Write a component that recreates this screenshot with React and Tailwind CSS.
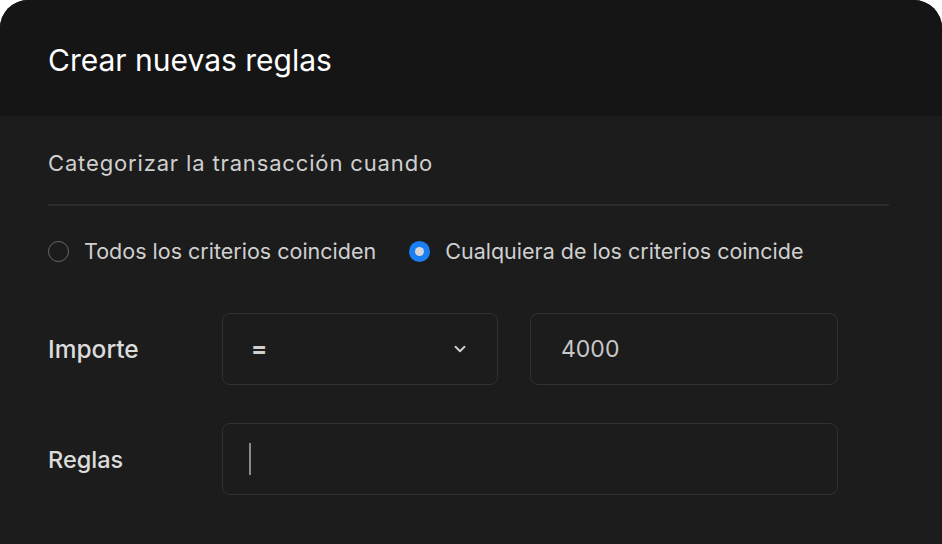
import React from 'react';
import { ChevronDown } from 'lucide-react';

const font = { fontFamily: 'Inter, "Noto Sans", sans-serif' };

const Radio = ({ checked, label }) => (
  <label className="flex items-center gap-[15px] cursor-pointer">
    {checked ? (
      <span className="w-[21px] h-[21px] rounded-full bg-[#1a7ff2] flex items-center justify-center">
        <span className="w-[9px] h-[9px] rounded-full bg-[#d6d6d6]" />
      </span>
    ) : (
      <span className="w-[21px] h-[21px] rounded-full border-[1.5px] border-[#6a6a6a]" />
    )}
    <span className="text-[21.5px] text-[#d0d0d0]">{label}</span>
  </label>
);

export default function App() {
  return (
    <div className="w-[942px] h-[544px] bg-white" style={font}>
      <div className="w-full h-full rounded-t-[28px] overflow-hidden bg-[#1c1c1c] flex flex-col">
        <div className="h-[116px] bg-[#151515] px-12 pt-[40px]">
          <h1 className="text-[30px] leading-[40px] text-white">Crear nuevas reglas</h1>
        </div>

        <div className="px-12 pr-[53px]">
          <div className="pt-[32px] pb-[26px] border-b-2 border-[#2c2c2c]">
            <p className="text-[22px] leading-[30px] text-[#cfcfcf] tracking-[0.85px]">Categorizar la transacción cuando</p>
          </div>

          <div className="flex items-center gap-[33px] pt-[29px]">
            <Radio label="Todos los criterios coinciden" />
            <Radio checked label="Cualquiera de los criterios coincide" />
          </div>

          <div className="flex items-center mt-[46px]">
            <span className="w-[174px] text-[24.5px] font-medium text-[#dcdcdc]">Importe</span>
            <div className="w-[276px] h-[72px] rounded-[8px] border border-[#313131] flex items-center justify-between pl-[28px] pr-[28px]">
              <span className="text-[24px] font-bold text-[#d0d0d0]">=</span>
              <ChevronDown size={18} strokeWidth={2.5} className="text-[#cfcfcf]" />
            </div>
            <div className="ml-[32px] w-[308px] h-[72px] rounded-[8px] border border-[#313131] flex items-center pl-[30px]">
              <span className="text-[23px] text-[#c8c8c8]">4000</span>
            </div>
          </div>

          <div className="flex items-center mt-[38px]">
            <span className="w-[174px] text-[23.5px] font-medium text-[#dcdcdc]">Reglas</span>
            <div className="w-[616px] h-[72px] rounded-[8px] border border-[#313131] flex items-center pl-[26px]">
              <span className="w-[1.5px] h-[32px] bg-[#8a8a8a]" />
            </div>
          </div>
        </div>
      </div>
    </div>
  );
}
